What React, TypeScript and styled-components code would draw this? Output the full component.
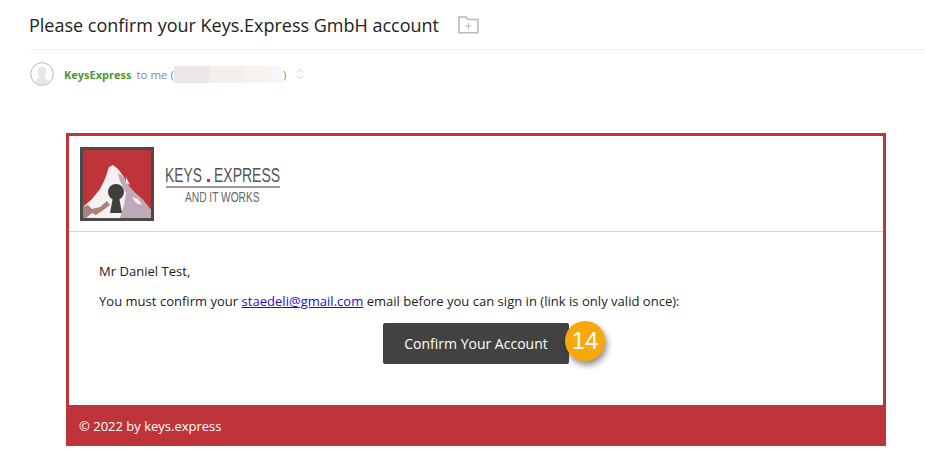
import * as React from 'react'
import styled, { createGlobalStyle } from 'styled-components'

const GlobalStyle = createGlobalStyle`
  html, body {
    margin: 0;
    padding: 0;
    background: #fff;
    font-family: "Open Sans", "Liberation Sans", sans-serif;
  }
`

const Page = styled.div`
  width: 925px;
  height: 473px;
  overflow: hidden;
  box-sizing: border-box;
`

const SubjectRow = styled.div`
  height: 49px;
  margin-left: 30px;
  border-bottom: 1px solid #eeeeee;
  display: flex;
  align-items: center;
  gap: 19px;
`

const Subject = styled.h1`
  margin: 0 0 0 -1px;
  font-size: 18px;
  font-weight: 400;
  color: #222;
  line-height: 26px;
`

const SenderRow = styled.div`
  display: flex;
  align-items: center;
  height: 24px;
  margin: 12px 0 0 30px;
  font-size: 11.5px;
  color: #8a8a8a;
`

const Sender = styled.span`
  margin-left: 10px;
  font-size: 11px;
  font-weight: 700;
  color: #4a9a2e;
`

const ToMe = styled.span`
  margin-left: 5px;
`

const Redacted = styled.span`
  width: 108px;
  height: 17px;
  background: linear-gradient(90deg, #ece6e8 0 32%, #f4efec 32% 64%, #f6f2ee 64% 90%, #f4f7fb 90%);
`

const CloseParen = styled.span`
  margin-left: 1px;
`

const ChevronSlot = styled.span`
  display: flex;
  margin-left: 10px;
`

const Frame = styled.div`
  margin: 47px 0 0 66px;
  width: 820px;
  height: 313px;
  box-sizing: border-box;
  border: 3px solid #bf3438;
  border-bottom: none;
  display: flex;
  flex-direction: column;
`

const Header = styled.div`
  height: 96px;
  box-sizing: border-box;
  padding: 11px 0 0 11px;
  border-bottom: 1px solid #d2d2d2;
  display: flex;
  gap: 11px;
`

const Body = styled.div`
  flex: 1;
  padding: 28px 30px 0;
  font-size: 13px;
  letter-spacing: 0.025px;
  color: #222;
`

const Line = styled.p`
  margin: 0 0 8px;
  line-height: 22px;
  height: 22px;
`

const MailLink = styled.a`
  color: #1a0dd6;
  text-decoration: underline;
`

const ButtonRow = styled.div`
  margin-top: 11px;
  display: flex;
  justify-content: center;
`

const ButtonWrap = styled.div`
  position: relative;
`

const ConfirmButton = styled.a`
  display: flex;
  align-items: center;
  justify-content: center;
  width: 186px;
  height: 41px;
  background: #424242;
  border-radius: 2px;
  color: #fff;
  font-size: 14px;
  letter-spacing: 0;
  cursor: pointer;
`

const Badge = styled.span`
  position: absolute;
  left: 182px;
  top: -2px;
  width: 40px;
  height: 40px;
  border-radius: 50%;
  background: #f9a80b;
  color: #fff;
  font-family: "Liberation Sans", Arial, sans-serif;
  font-size: 24px;
  display: flex;
  align-items: center;
  justify-content: center;
  box-shadow: 2px 4px 6px rgba(0, 0, 0, 0.45);
`

const Footer = styled.div`
  height: 41px;
  margin: 0 -3px;
  padding-left: 13px;
  background: #bf3438;
  color: #fff;
  font-size: 13px;
  display: flex;
  align-items: center;
`

const Avatar = () => (
  <svg width="24" height="24" viewBox="0 0 24 24">
    <circle cx="12" cy="12" r="11.3" fill="#fff" stroke="#b5b5b5" />
    <clipPath id="av">
      <circle cx="12" cy="12" r="10.5" />
    </clipPath>
    <g clipPath="url(#av)" fill="#e6e6e6">
      <ellipse cx="12" cy="10" rx="4.2" ry="5.4" />
      <path d="M9.5 14 L14.5 14 L15 16.5 C17.5 17.5 19.5 18 20 22 L4 22 C4.5 18 6.5 17.5 9 16.5 Z" />
    </g>
  </svg>
)

const FolderIcon = () => (
  <svg width="21" height="18" viewBox="0 0 21 18" fill="none" stroke="#b9b9b9" strokeWidth="1.6">
    <path d="M1 16.7 V1 H8 L10 3.5 H20 V16.7 Z" />
    <path d="M10.5 7 V13 M7.5 10 H13.5" strokeWidth="1" />
  </svg>
)

const Chevrons = () => (
  <svg width="8" height="12" viewBox="0 0 8 12" fill="none" stroke="#cfcfcf" strokeWidth="1">
    <path d="M1 4.5 L4 1.2 L7 4.5 M1 7.5 L4 10.8 L7 7.5" />
  </svg>
)

const LogoMark = () => (
  <svg width="74" height="74" viewBox="0 0 74 74">
    <rect width="74" height="74" fill="#4a4a4a" />
    <rect x="3" y="3" width="68" height="68" fill="#bf3438" />
    {/* mountain body, snow on the left, shaded on the right */}
    <path d="M3 60 L12 52 L20 42 L25 32 L29 20 L33 18 L38 22 L44 30 L47 37 L55 46 L62 52 L71 63 V71 H3 Z" fill="#f5f0f2" />
    <path d="M38 26 L44 30 L47 37 L55 46 L62 52 L71 63 V71 H40 L44 58 L46 46 L40 34 Z" fill="#c0a9ba" />
    <path d="M52 50 L58 52 L62 58 L56 56 Z M46 30 L50 38 L46 36 Z" fill="#f5f0f2" />
    <path d="M3 71 V60 L8 58 L12 62 L20 60 L27 54 L30 58 L22 64 L16 68 L14 71 Z" fill="#a98277" />
    <path d="M6 71 L12 66 L16 68 L14 71 Z" fill="#f5f0f2" />
    <circle cx="36" cy="45" r="8" fill="#3f3f3f" />
    <path d="M33 50 L39 50 L42 66 L30 66 Z" fill="#3f3f3f" />
  </svg>
)

const LogoText = () => (
  <svg width="118" height="74" viewBox="0 0 118 74" fontFamily="'Liberation Sans', sans-serif">
    <text transform="translate(0 35) scale(0.66 1)" fontSize="21" fill="#555">
      KEYS
    </text>
    <rect x="42" y="32" width="3" height="3" fill="#bf3438" />
    <text transform="translate(49 35) scale(0.667 1)" fontSize="21" fill="#555">
      EXPRESS
    </text>
    <rect x="1" y="39" width="114" height="2" fill="#9a9a9a" />
    <text transform="translate(20 55) scale(0.68 1)" fontSize="15" fill="#666">
      AND IT WORKS
    </text>
  </svg>
)

export default function App() {
  return (
    <Page>
      <GlobalStyle />
      <SubjectRow>
        <Subject>Please confirm your Keys.Express GmbH account</Subject>
        <FolderIcon />
      </SubjectRow>
      <SenderRow>
        <Avatar />
        <Sender>KeysExpress</Sender>
        <ToMe>to me (</ToMe>
        <Redacted />
        <CloseParen>)</CloseParen>
        <ChevronSlot>
          <Chevrons />
        </ChevronSlot>
      </SenderRow>
      <Frame>
        <Header>
          <LogoMark />
          <LogoText />
        </Header>
        <Body>
          <Line>Mr Daniel Test,</Line>
          <Line>
            You must confirm your <MailLink>staedeli@gmail.com</MailLink> email before you can sign in (link is only valid once):
          </Line>
          <ButtonRow>
            <ButtonWrap>
              <ConfirmButton>Confirm Your Account</ConfirmButton>
              <Badge>14</Badge>
            </ButtonWrap>
          </ButtonRow>
        </Body>
        <Footer>© 2022 by keys.express</Footer>
      </Frame>
    </Page>
  )
}
